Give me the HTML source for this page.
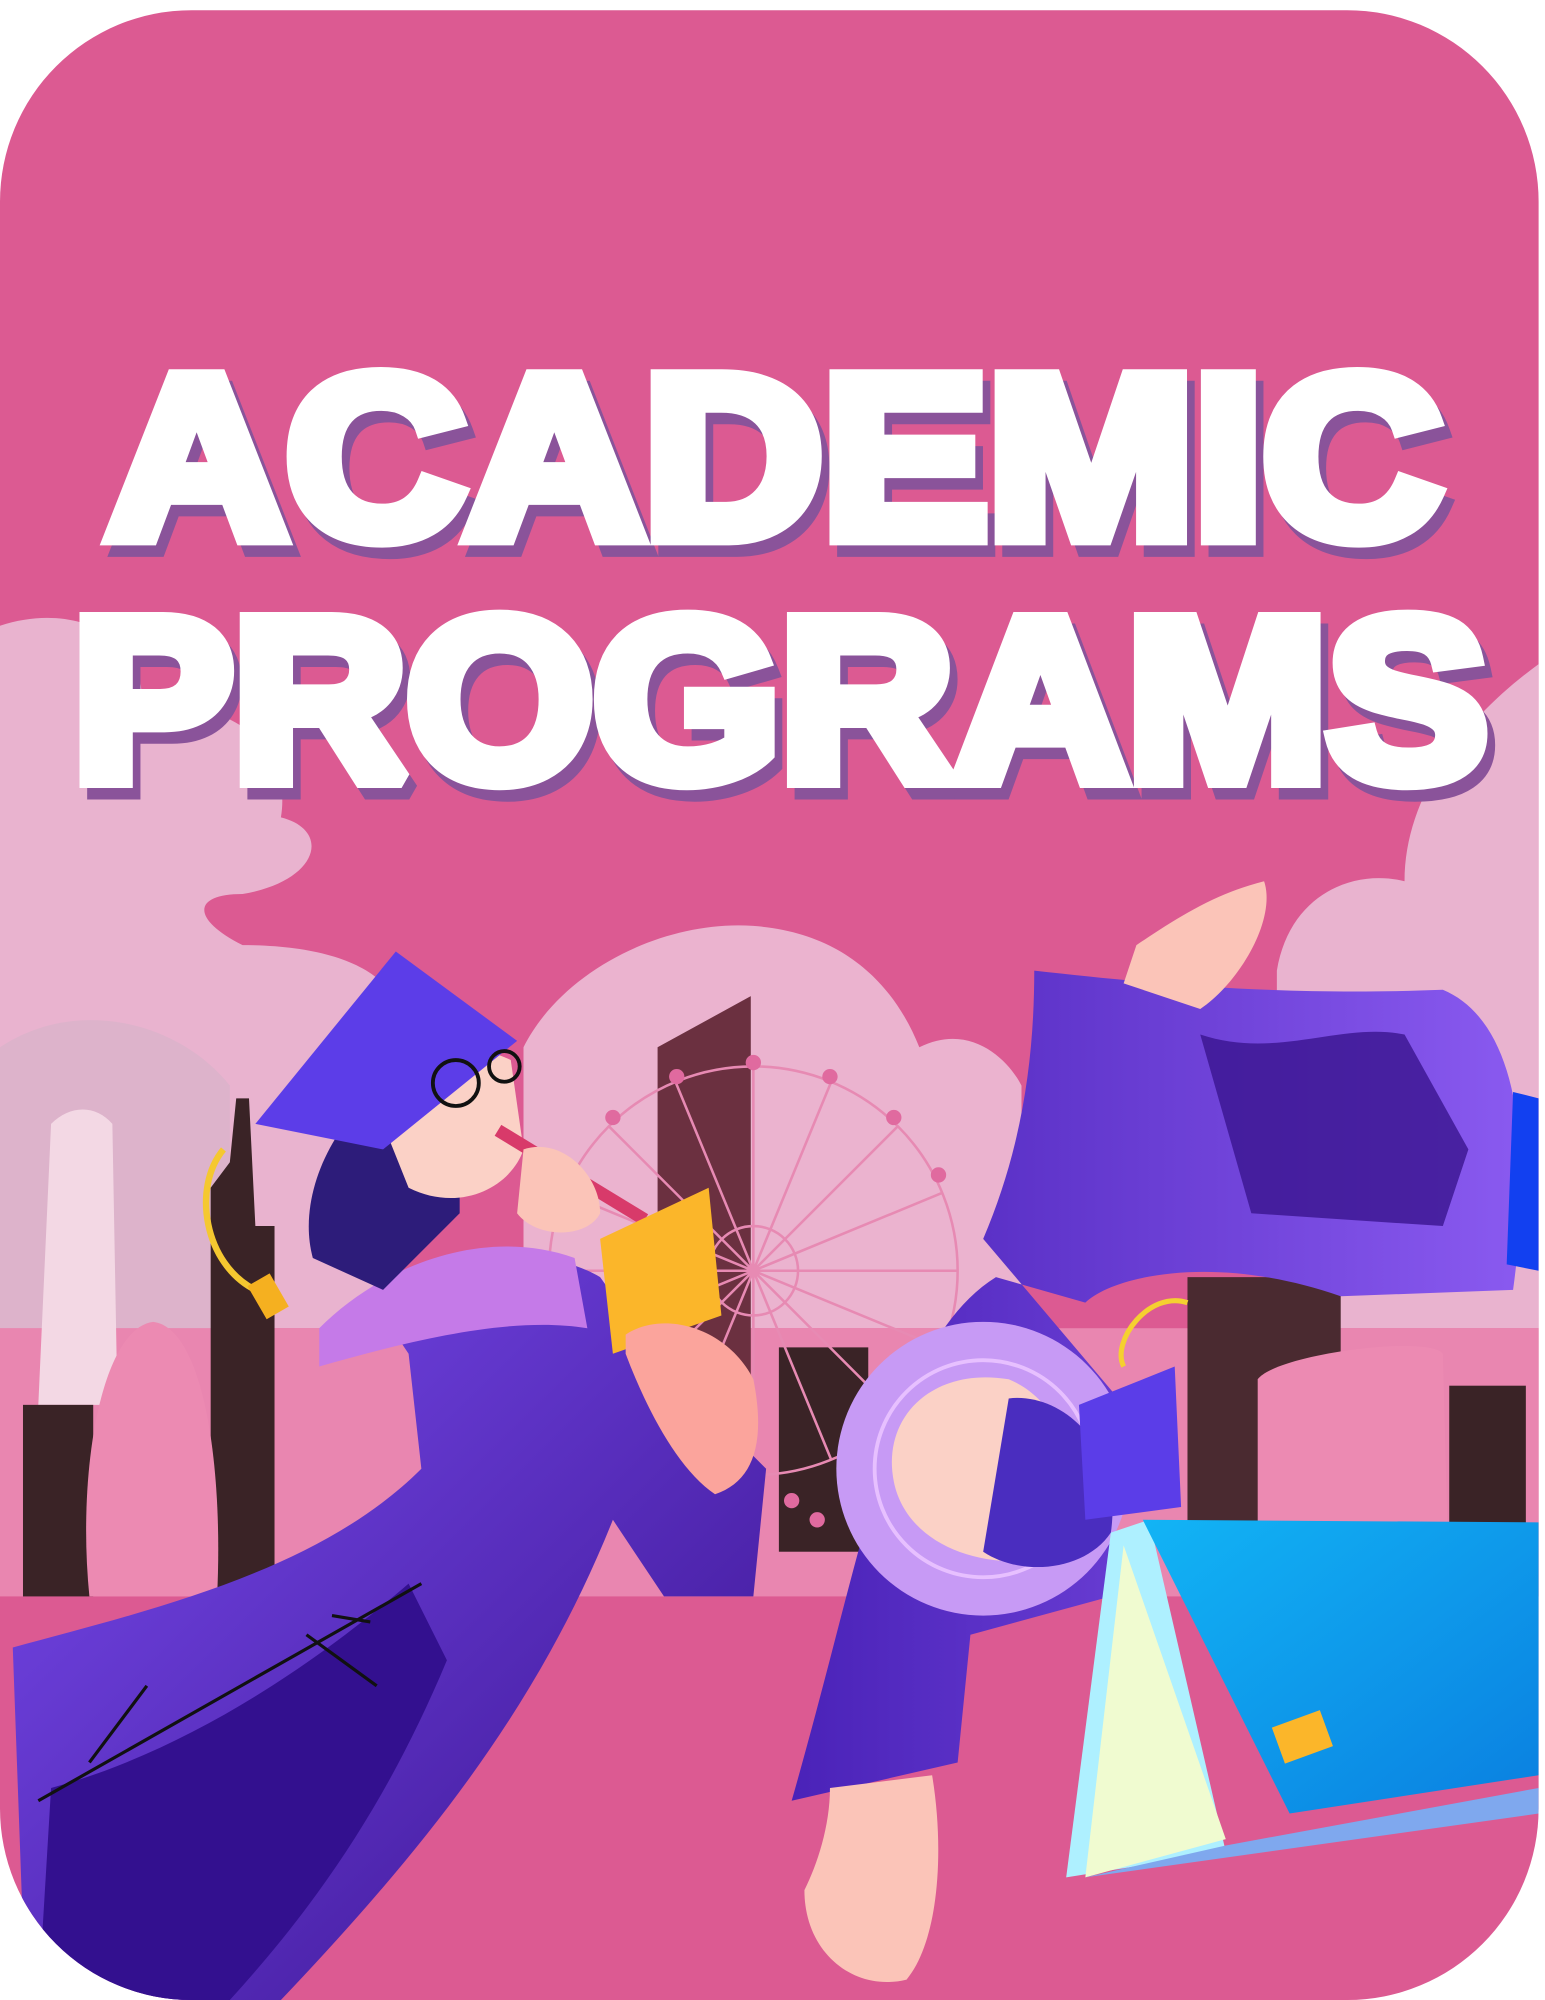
<!DOCTYPE html>
<html><head><meta charset="utf-8">
<style>
html,body{margin:0;padding:0;background:#fff;}
svg{display:block;}
</style></head>
<body>
<svg width="1545" height="2000" viewBox="0 0 1210 1566" preserveAspectRatio="none" xmlns="http://www.w3.org/2000/svg">
<defs>
<clipPath id="card"><rect x="0" y="8" width="1205" height="1558" rx="150"/></clipPath>
<linearGradient id="robe" x1="0" y1="0" x2="1" y2="1"><stop offset="0" stop-color="#7a4cf0"/><stop offset="1" stop-color="#3a138f"/></linearGradient>
<linearGradient id="robe2" x1="0" y1="0" x2="1" y2="0"><stop offset="0" stop-color="#4a22b8"/><stop offset="1" stop-color="#8a5af0"/></linearGradient>
<linearGradient id="book" x1="0" y1="0" x2="1" y2="1"><stop offset="0" stop-color="#12b4f5"/><stop offset="1" stop-color="#0a7fe0"/></linearGradient>
</defs>
<g clip-path="url(#card)">
<rect x="0" y="0" width="1210" height="1566" fill="#dc5a92"/>
<path d="M0 490 C60 470 120 500 110 560 C170 540 230 580 220 640 C260 650 250 690 190 700 C150 700 150 720 190 740 C240 740 280 750 300 770 L300 1040 L0 1040 Z" fill="#e9b3cf"/>
<path d="M0 820 C60 780 140 800 180 850 L180 1040 L0 1040 Z" fill="#ddb3cb"/>
<path d="M410 820 C440 760 520 720 590 725 C660 730 700 770 720 820 C760 800 790 830 800 850 L800 1040 L410 1040 Z" fill="#ebb3cf"/>
<path d="M1000 760 C1010 700 1060 680 1100 690 C1100 620 1150 560 1205 520 L1205 1040 L1000 1040 Z" fill="#e9b3cf"/>
<rect x="0" y="1040" width="1210" height="210" fill="#e986b0"/>
<path d="M30 1100 L40 880 C55 865 75 865 88 880 L92 1100 Z" fill="#f3d8e4"/>
<rect x="18" y="1100" width="55" height="150" fill="#3a2326"/>
<path d="M165 1250 L165 930 L180 910 L185 860 L195 860 L200 960 L215 960 L215 1250 Z" fill="#3a2326"/>
<path d="M70 1250 C60 1150 80 1040 120 1035 C160 1040 175 1150 170 1250 Z" fill="#ec8ab2"/>
<path d="M515 820 L588 780 L588 1210 L515 1210 Z" fill="#6b3040"/>
<rect x="610" y="1055" width="70" height="160" fill="#3a2326"/>
<rect x="930" y="1000" width="120" height="250" fill="#4a2a30"/>
<path d="M985 1250 L985 1080 C1000 1060 1120 1045 1130 1060 L1135 1250 Z" fill="#ec8ab2"/>
<rect x="1135" y="1085" width="60" height="165" fill="#3a2326"/>
<g stroke="#e78ab3" stroke-width="2" fill="none">
<circle cx="590" cy="995" r="160"/><circle cx="590" cy="995" r="35"/>
<path d="M590 835V1155M430 995H750M477 882L703 1108M703 882L477 1108M529 847L651 1143M651 847L529 1143M442 934L738 1056M738 934L442 1056"/>
</g>
<g fill="#e06a9f"><circle cx="590" cy="832" r="6"/><circle cx="650" cy="843" r="6"/><circle cx="700" cy="875" r="6"/><circle cx="735" cy="920" r="6"/><circle cx="530" cy="843" r="6"/><circle cx="480" cy="875" r="6"/><circle cx="445" cy="920" r="6"/><circle cx="620" cy="1175" r="6"/><circle cx="640" cy="1190" r="6"/></g>
<path d="M10 1290 C120 1260 250 1230 330 1150 L320 1060 L300 1030 C350 990 420 970 470 1000 L520 1070 L600 1150 L590 1250 L520 1250 L480 1190 C420 1340 330 1450 220 1566 L20 1566 Z" fill="url(#robe)"/>
<path d="M40 1400 C150 1370 250 1300 320 1240 L350 1300 C300 1420 240 1500 180 1566 L30 1566 Z" fill="#33108f"/>
<path d="M250 1040 C300 990 380 960 450 985 L460 1040 C400 1030 320 1050 250 1070 Z" fill="#c57ae8"/>
<path d="M30 1410 L330 1240 M260 1265 L290 1270 M240 1280 L295 1320 M70 1380 L115 1320" stroke="#111" stroke-width="2.5" fill="none"/>
<path d="M245 985 C230 930 270 860 320 840 L360 850 L360 950 L300 1010 Z" fill="#2d1c7a"/>
<path d="M300 880 C310 830 360 810 400 830 L410 900 C400 930 360 950 320 930 Z" fill="#fbd1c6"/>
<path d="M200 880 L310 745 L405 815 L300 900 Z" fill="#5c3de8"/>
<circle cx="357" cy="848" r="18" fill="none" stroke="#111" stroke-width="3"/><circle cx="395" cy="835" r="12" fill="none" stroke="#111" stroke-width="3"/>
<path d="M175 900 C150 930 160 990 200 1010" stroke="#f5c830" stroke-width="5" fill="none"/>
<rect x="200" y="1000" width="20" height="30" fill="#f5b020" transform="rotate(-30 210 1015)"/>
<path d="M390 885 L505 955" stroke="#d83a6a" stroke-width="10"/>
<path d="M410 900 C440 890 470 920 470 950 C460 970 420 970 405 950 Z" fill="#fbc4b8"/>
<path d="M470 970 L555 930 L565 1030 L480 1060 Z" fill="#fbb62a"/>
<path d="M490 1045 C520 1025 570 1040 590 1080 C600 1130 590 1160 560 1170 C530 1150 505 1100 490 1060 Z" fill="#fba49c"/>
<path d="M810 760 C900 770 1000 780 1130 775 C1190 800 1200 900 1185 1010 L1050 1015 C950 980 870 1000 850 1020 L780 1000 C700 1050 680 1200 620 1410 L750 1380 L760 1280 L870 1250 L880 1100 L770 970 C800 900 810 830 810 760 Z" fill="url(#robe2)"/>
<path d="M940 810 C1000 830 1050 800 1100 810 L1150 900 L1130 960 L980 950 Z" fill="#3a148f" opacity=".8"/>
<path d="M1185 855 L1205 860 L1205 995 L1180 990 Z" fill="#1240f0"/>
<circle cx="770" cy="1150" r="115" fill="#c79af5"/>
<circle cx="770" cy="1150" r="85" fill="none" stroke="#e7c0ff" stroke-width="3"/>
<path d="M700 1160 C690 1110 730 1070 790 1080 C840 1100 860 1180 820 1220 C770 1230 710 1210 700 1160 Z" fill="#fbd1c6"/>
<path d="M790 1095 C830 1090 880 1130 870 1200 C850 1230 800 1235 770 1215 Z" fill="#4a2dbf"/>
<path d="M845 1100 L920 1070 L925 1180 L850 1190 Z" fill="#5b3de8"/>
<path d="M880 1070 C870 1050 900 1010 930 1020" stroke="#f5d030" stroke-width="4" fill="none"/>
<path d="M890 740 C920 720 950 700 990 690 C1000 720 970 770 940 790 L880 770 Z" fill="#fbc4b8"/>
<path d="M650 1400 L730 1390 C740 1450 735 1520 710 1550 C670 1560 630 1530 630 1480 C640 1460 650 1430 650 1400 Z" fill="#fbc4b8"/>
<path d="M870 1200 L900 1190 L960 1450 L835 1470 Z" fill="#aef0ff"/>
<path d="M850 1470 L880 1210 L960 1440 Z" fill="#f0fbd0"/>
<path d="M895 1190 L1205 1192 L1205 1390 L1010 1420 Z" fill="url(#book)"/>
<rect x="1000" y="1345" width="40" height="30" fill="#fbb62a" transform="rotate(-20 1020 1360)"/>
<path d="M850 1470 L1205 1420 L1205 1400 L960 1445 Z" fill="#7fa8ee"/>
</g>
<g font-family="Liberation Sans, Arial, sans-serif" font-weight="bold" font-size="180" stroke-linejoin="miter" stroke-miterlimit="2">
<text x="90" y="429" textLength="1045" lengthAdjust="spacingAndGlyphs" fill="#8a539a" stroke="#8a539a" stroke-width="14">ACADEMIC</text>
<text x="63" y="619" textLength="1108" lengthAdjust="spacingAndGlyphs" fill="#8a539a" stroke="#8a539a" stroke-width="14">PROGRAMS</text>
<text x="84" y="420" textLength="1045" lengthAdjust="spacingAndGlyphs" fill="#ffffff" stroke="#ffffff" stroke-width="14">ACADEMIC</text>
<text x="57" y="610" textLength="1108" lengthAdjust="spacingAndGlyphs" fill="#ffffff" stroke="#ffffff" stroke-width="14">PROGRAMS</text>
</g>
</svg>
</body></html>
